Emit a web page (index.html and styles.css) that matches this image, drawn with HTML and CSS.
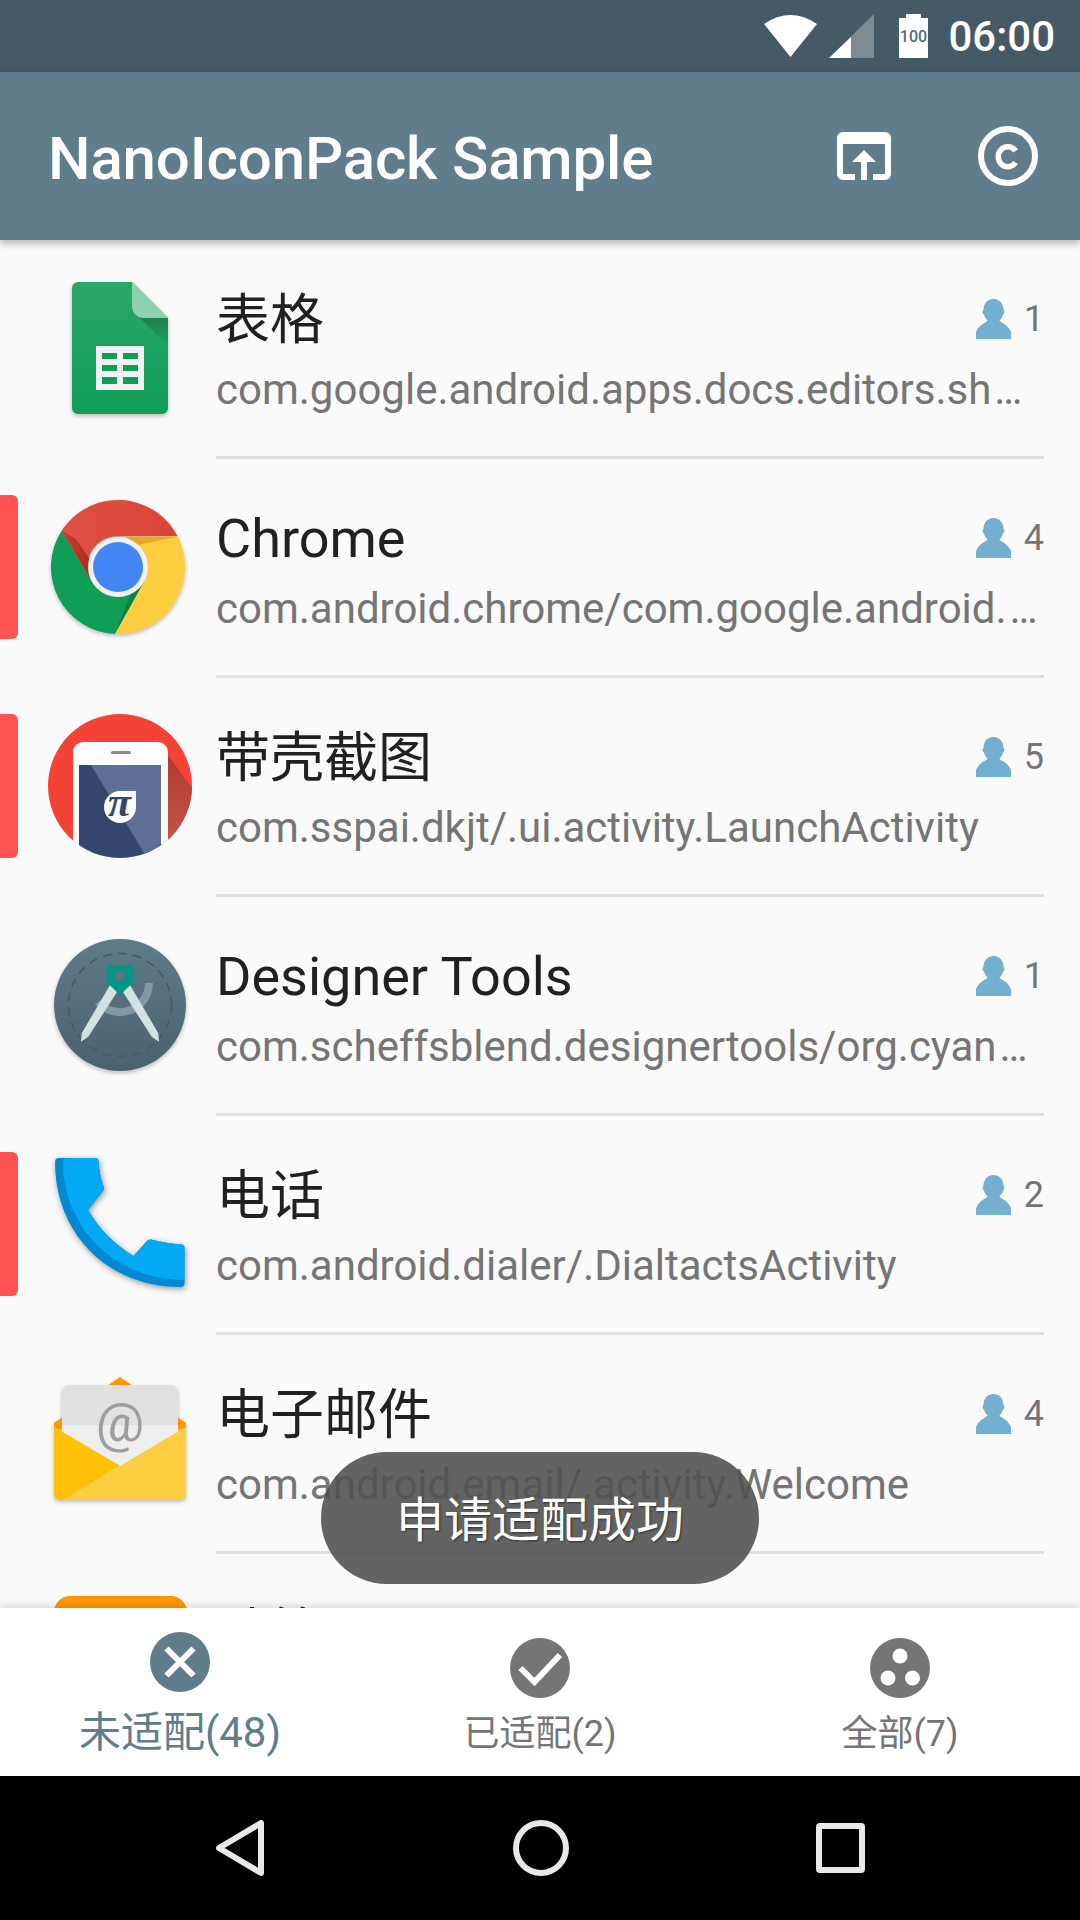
FILE: index.html
```html
<!DOCTYPE html>
<html lang="en">
<head>
    <meta charset="UTF-8">
    <meta name="viewport" content="width=device-width, initial-scale=1.0">
    <title>NanoIconPack Sample</title>
    <link rel="stylesheet" href="styles.css">
</head>
<body>
<div class="screen">
    <div class="status-bar">
        <svg class="st-wifi" width="53" height="42" viewBox="0 0 53 42"><path d="M0 9 Q26.500 -9 53 9 L26.500 42 Z" fill="#fff"/></svg>
        <svg class="st-signal" width="45" height="44" viewBox="0 0 45 44"><path d="M45 0 V44 H0 Z" fill="#fff" fill-opacity=".3"/><path d="M22 23 V44 H0 Z" fill="#fff"/></svg>
        <svg class="st-battery" width="29" height="44" viewBox="0 0 29 44"><path d="M7 0 H22 V4 H29 V44 H0 V4 H7 Z" fill="#fff"/><text class="batt-text" x="14.500" y="27.500" text-anchor="middle">100</text></svg>
        <span class="clock">06:00</span>
    </div>

    <div class="app-bar">
        <h1 class="app-title">NanoIconPack Sample</h1>
        <svg class="act-share" width="54" height="48" viewBox="0 0 54 48"><path d="M6 0 H48 a6 6 0 0 1 6 6 V42 a6 6 0 0 1 -6 6 H36 V42 H48 V12 H6 V42 H18 V48 H6 a6 6 0 0 1 -6 -6 V6 a6 6 0 0 1 6 -6 Z" fill="#fff"/><path d="M27 18 L39 30 H30 V48 H24 V30 H15 Z" fill="#fff"/></svg>
        <svg class="act-copy" width="60" height="60" viewBox="0 0 60 60"><circle cx="30" cy="30" r="27" fill="none" stroke="#fff" stroke-width="6"/><path d="M37.500 25 A9.500 10 0 1 0 37.500 36.500" fill="none" stroke="#fff" stroke-width="5.500"/></svg>
    </div>

    <div class="app-list">
        <div class="row">
            <div class="mark"></div>
            <svg class="app-icon" viewBox="0 0 144 144">
                <defs><linearGradient id="sheetBody" x1="0" y1="0" x2="0" y2="1"><stop offset="0" stop-color="#2aa76a"/><stop offset="1" stop-color="#0f9d58"/></linearGradient>
                <linearGradient id="sheetFold" x1="0" y1="0" x2="0" y2="1"><stop offset="0" stop-color="#1a7f4c"/><stop offset="1" stop-color="#1a7f4c" stop-opacity="0"/></linearGradient></defs>
                <path d="M30 6 H84 L120 42 V132 a6 6 0 0 1 -6 6 H30 a6 6 0 0 1 -6 -6 V12 a6 6 0 0 1 6 -6 Z" fill="url(#sheetBody)"/>
                <path d="M91 41 L120 70 V42 H96 Z" fill="url(#sheetFold)"/>
                <path d="M84 6 L120 42 H96 a12 12 0 0 1 -12 -12 Z" fill="#8ed1b1"/>
                <rect x="48" y="70" width="48" height="44" fill="#f1f1f1"/>
                <path d="M54 77 H69 V83 H54 Z M75 77 H90 V83 H75 Z M54 89 H69 V95 H54 Z M75 89 H90 V95 H75 Z M54 101 H69 V108 H54 Z M75 101 H90 V108 H75 Z" fill="#0f9d58"/>
            </svg>
            <div class="row-body">
                <div class="row-top">
                    <span class="row-title cjk">表格</span>
                    <svg class="user-icon" viewBox="0 0 35 40"><path d="M17.500 0 C24 0 27.500 5 27.500 11 C29 12 28.500 15 27 15.500 C26.500 18 25 20 23.500 21.500 C24 24 31 24 35 33 V40 H0 V33 C4 24 11 24 11.500 21.500 C10 20 8.500 18 8 15.500 C6.500 15 6 12 7.500 11 C7.500 5 11 0 17.500 0 Z"/></svg>
                    <span class="row-count">1</span>
                </div>
                <div class="row-sub">com.google.android.apps.docs.editors.sh<span class="dots">…</span></div>
            </div>
        </div>

        <div class="row">
            <div class="mark mark-on"></div>
            <svg class="app-icon" viewBox="0 0 144 144">
                <defs><linearGradient id="chromeRed" x1="0" y1="0" x2="1" y2="0"><stop offset="0" stop-color="#dd5143"/><stop offset="1" stop-color="#db4437"/></linearGradient>
                <linearGradient id="chromeWedge" x1="0" y1="0" x2="1" y2="0"><stop offset="0" stop-color="#c9402f"/><stop offset="1" stop-color="#a82a1a"/></linearGradient></defs>
                <path d="M13.700 35.700 L44 87 H96 L67 139 A67 67 0 0 1 13.700 35.700 Z" fill="#0f9d58"/>
                <path d="M67 139 L96 87 L70 102 L82 100 Z" fill="#0b8043"/>
                <path d="M13.700 35.700 A67 67 0 0 1 129.500 41.200 H70 A30 30 0 0 0 44 87 Z" fill="url(#chromeRed)"/>
                <path d="M13.700 35.700 L44 87 L47 72 L28 44 Z" fill="url(#chromeWedge)"/>
                <path d="M129.500 41.200 A67 67 0 0 1 67 139 L96 87 A30 30 0 0 0 70 42 Z" fill="#ffcd40"/>
                <path d="M78 42 H128 L90 50 Z" fill="#e8a825"/>
                <circle cx="70" cy="72" r="30" fill="#f1f1f1"/>
                <circle cx="70" cy="72" r="25" fill="#4285f4"/>
            </svg>
            <div class="row-body">
                <div class="row-top">
                    <span class="row-title">Chrome</span>
                    <svg class="user-icon" viewBox="0 0 35 40"><path d="M17.500 0 C24 0 27.500 5 27.500 11 C29 12 28.500 15 27 15.500 C26.500 18 25 20 23.500 21.500 C24 24 31 24 35 33 V40 H0 V33 C4 24 11 24 11.500 21.500 C10 20 8.500 18 8 15.500 C6.500 15 6 12 7.500 11 C7.500 5 11 0 17.500 0 Z"/></svg>
                    <span class="row-count">4</span>
                </div>
                <div class="row-sub">com.android.chrome/com.google.android.<span class="dots">…</span></div>
            </div>
        </div>

        <div class="row">
            <div class="mark mark-on"></div>
            <svg class="app-icon icon-flat" viewBox="0 0 144 144">
                <defs><clipPath id="piClip"><circle cx="72" cy="72" r="72"/></clipPath>
                <linearGradient id="piShade" x1="0" y1="0" x2="0" y2="1"><stop offset="0" stop-color="#b23c30"/><stop offset="1" stop-color="#c9564c"/></linearGradient></defs>
                <g clip-path="url(#piClip)">
                    <rect width="144" height="144" fill="#f44336"/>
                    <path d="M120 41 L144 74 V144 H120 Z" fill="url(#piShade)"/>
                    <path d="M25 144 V38 a10 10 0 0 1 10 -10 H110 a10 10 0 0 1 10 10 V144 Z" fill="#fff"/>
                    <rect x="31" y="51" width="82" height="93" fill="#34466e"/>
                    <path d="M43 51 H113 V129 L99 144 Z" fill="#5e6f96"/>
                    <rect x="63" y="37" width="20" height="3" rx="1.500" fill="#8a8a8a"/>
                    <path d="M72 77 H88 V93 A16 16 0 1 1 72 77 Z" fill="#fff"/>
                    <text class="pi-text" x="71.500" y="102" text-anchor="middle">π</text>
                </g>
            </svg>
            <div class="row-body">
                <div class="row-top">
                    <span class="row-title cjk">带壳截图</span>
                    <svg class="user-icon" viewBox="0 0 35 40"><path d="M17.500 0 C24 0 27.500 5 27.500 11 C29 12 28.500 15 27 15.500 C26.500 18 25 20 23.500 21.500 C24 24 31 24 35 33 V40 H0 V33 C4 24 11 24 11.500 21.500 C10 20 8.500 18 8 15.500 C6.500 15 6 12 7.500 11 C7.500 5 11 0 17.500 0 Z"/></svg>
                    <span class="row-count">5</span>
                </div>
                <div class="row-sub">com.sspai.dkjt/.ui.activity.LaunchActivity</div>
            </div>
        </div>

        <div class="row">
            <div class="mark"></div>
            <svg class="app-icon" viewBox="0 0 144 144">
                <defs><linearGradient id="toolsBg" x1="0" y1="0" x2="0" y2="1"><stop offset="0" stop-color="#5f7b88"/><stop offset="1" stop-color="#4a626d"/></linearGradient></defs>
                <circle cx="72" cy="72" r="66" fill="url(#toolsBg)"/>
                <circle cx="72" cy="72" r="51.500" fill="none" stroke="#445a65" stroke-width="1.500" stroke-dasharray="9 6"/>
                <path d="M101 50 A29 29 0 0 1 50 69" fill="none" stroke="#8298a3" stroke-width="8"/>
                <path d="M62 52 L33.700 100.300 L33 108.700 L40.300 103.700 L70.300 57 Z M82 52 L110.300 100.300 L111 108.700 L103.700 103.700 L73.700 57 Z" fill="#d0e3e1"/>
                <path d="M62 32 H82 a3.500 3.500 0 0 1 3.500 3.500 V49 L72 62 L58.500 49 V35.500 a3.500 3.500 0 0 1 3.500 -3.500 Z" fill="#009688"/>
                <circle cx="72" cy="43" r="5.500" fill="#5a7380"/>
            </svg>
            <div class="row-body">
                <div class="row-top">
                    <span class="row-title">Designer Tools</span>
                    <svg class="user-icon" viewBox="0 0 35 40"><path d="M17.500 0 C24 0 27.500 5 27.500 11 C29 12 28.500 15 27 15.500 C26.500 18 25 20 23.500 21.500 C24 24 31 24 35 33 V40 H0 V33 C4 24 11 24 11.500 21.500 C10 20 8.500 18 8 15.500 C6.500 15 6 12 7.500 11 C7.500 5 11 0 17.500 0 Z"/></svg>
                    <span class="row-count">1</span>
                </div>
                <div class="row-sub">com.scheffsblend.designertools/org.cyan<span class="dots">…</span></div>
            </div>
        </div>

        <div class="row">
            <div class="mark mark-on"></div>
            <svg class="app-icon icon-dark" viewBox="0 0 144 144">
                <path d="M7 10 a4 4 0 0 1 4 -4 H47 a3.500 3.500 0 0 1 3.500 3 C51 18 53 28 56 36 a3 3 0 0 1 -1 3 L40 58 C52 78 66 92 85.500 104 L99 89 a4 4 0 0 1 4 -1.500 C113 90 124 92 133 92.500 a3.500 3.500 0 0 1 3.500 3.500 V131 a4 4 0 0 1 -4 4 C60 135 7 82 7 10 Z" fill="#0288d1"/>
                <path d="M15 10 a4 4 0 0 1 4 -4 H47 a3.500 3.500 0 0 1 3.500 3 C51 18 53 28 56 36 a3 3 0 0 1 -1 3 L40 58 C52 78 66 92 85.500 104 L99 89 a4 4 0 0 1 4 -1.500 C113 90 124 92 133 92.500 a3.500 3.500 0 0 1 3.500 3.500 V128 C68 128 15 76 15 10 Z" fill="#03a9f4"/>
            </svg>
            <div class="row-body">
                <div class="row-top">
                    <span class="row-title cjk">电话</span>
                    <svg class="user-icon" viewBox="0 0 35 40"><path d="M17.500 0 C24 0 27.500 5 27.500 11 C29 12 28.500 15 27 15.500 C26.500 18 25 20 23.500 21.500 C24 24 31 24 35 33 V40 H0 V33 C4 24 11 24 11.500 21.500 C10 20 8.500 18 8 15.500 C6.500 15 6 12 7.500 11 C7.500 5 11 0 17.500 0 Z"/></svg>
                    <span class="row-count">2</span>
                </div>
                <div class="row-sub">com.android.dialer/.DialtactsActivity</div>
            </div>
        </div>

        <div class="row">
            <div class="mark"></div>
            <svg class="app-icon" viewBox="0 0 144 144">
                <path d="M6 58 V52 L72 6 L138 52 V58 Z" fill="#ff9800"/>
                <path d="M14 22 a8 8 0 0 1 8 -8 H122 a8 8 0 0 1 8 8 V54 H14 Z" fill="#e0e0e0"/>
                <path d="M14 54 H130 V110 H14 Z" fill="#eee"/>
                <text class="at-text" x="72" y="69.500" text-anchor="middle">@</text>
                <path d="M6 55.700 L72 94.700 L15 129 H12 a6 6 0 0 1 -6 -6 Z" fill="#ffc107"/>
                <path d="M138 55.700 L15 129 H132 a6 6 0 0 0 6 -6 Z" fill="#ffcd40"/>
            </svg>
            <div class="row-body">
                <div class="row-top">
                    <span class="row-title cjk">电子邮件</span>
                    <svg class="user-icon" viewBox="0 0 35 40"><path d="M17.500 0 C24 0 27.500 5 27.500 11 C29 12 28.500 15 27 15.500 C26.500 18 25 20 23.500 21.500 C24 24 31 24 35 33 V40 H0 V33 C4 24 11 24 11.500 21.500 C10 20 8.500 18 8 15.500 C6.500 15 6 12 7.500 11 C7.500 5 11 0 17.500 0 Z"/></svg>
                    <span class="row-count">4</span>
                </div>
                <div class="row-sub">com.android.email/.activity.Welcome</div>
            </div>
        </div>

        <div class="row">
            <div class="mark"></div>
            <svg class="app-icon icon-flat" viewBox="0 0 144 144"><rect x="6" y="6" width="133" height="132" rx="16" fill="#ff9800"/></svg>
            <div class="row-body">
                <div class="row-top">
                    <span class="row-title cjk">计算器</span>
                </div>
            </div>
        </div>
    </div>

    <div class="tabs">
        <div class="tab tab-on">
            <svg class="tab-icon" viewBox="0 0 60 60"><circle cx="30" cy="30" r="30"/><path d="M16.500 16.500 L43.500 43.500 M43.500 16.500 L16.500 43.500" stroke="#fff" stroke-width="6" fill="none"/></svg>
            <span class="tab-label">未适配(48)</span>
        </div>
        <div class="tab">
            <svg class="tab-icon" viewBox="0 0 60 60"><circle cx="30" cy="30" r="30"/><path d="M10.500 30 L24.500 44 L50 17" stroke="#fff" stroke-width="6" fill="none"/></svg>
            <span class="tab-label">已适配(2)</span>
        </div>
        <div class="tab">
            <svg class="tab-icon" viewBox="0 0 60 60"><circle cx="30" cy="30" r="30"/><circle cx="30" cy="18" r="7.500" fill="#fff"/><circle cx="18" cy="40" r="7.500" fill="#fff"/><circle cx="42.500" cy="40" r="7.500" fill="#fff"/></svg>
            <span class="tab-label">全部(7)</span>
        </div>
    </div>

    <div class="nav-bar">
        <svg width="48" height="56" viewBox="0 0 48 56"><path d="M3 28 L45 3 V53 Z" fill="none" stroke="#e8e8e8" stroke-width="6" stroke-linejoin="round"/></svg>
        <svg class="nav-home" width="56" height="56" viewBox="0 0 56 56"><circle cx="28" cy="28" r="25" fill="none" stroke="#e8e8e8" stroke-width="6"/></svg>
        <svg width="49" height="50" viewBox="0 0 49 50"><rect x="3" y="3" width="43" height="44" rx="1" fill="none" stroke="#e8e8e8" stroke-width="6"/></svg>
    </div>

    <div class="toast">申请适配成功</div>
</div>
</body>
</html>
```

FILE: styles.css
```css
* {
    box-sizing: border-box;
}
body {
    margin: 0;
    font-family: Roboto, "Noto Sans CJK SC", sans-serif;
    background-color: #fafafa;
}
.screen {
    position: relative;
    width: 1080px;
    height: 1920px;
    display: flex;
    flex-direction: column;
    overflow: hidden;
}
.status-bar {
    height: 72px;
    flex-shrink: 0;
    background-color: #455a64;
    display: flex;
    justify-content: flex-end;
    align-items: center;
    padding-right: 25px;
}
.st-signal {
    margin-left: 12px;
}
.st-battery {
    margin-left: 25px;
}
.batt-text {
    font-size: 16px;
    font-weight: 500;
    fill: #546e7a;
}
.clock {
    margin-left: 20px;
    color: #fff;
    font-size: 42px;
    font-weight: 500;
}
.app-bar {
    height: 168px;
    flex-shrink: 0;
    background-color: #607d8b;
    display: flex;
    align-items: center;
    padding: 0 42px 0 48px;
    box-shadow: 0 3px 8px rgba(0, 0, 0, 0.3);
    z-index: 2;
}
.app-title {
    flex: 1;
    margin: 4px 0 0;
    color: #fff;
    font-size: 60px;
    font-weight: 500;
    letter-spacing: -0.15px;
}
.act-copy {
    margin-left: 87px;
}
.app-list {
    flex: 1;
    min-height: 0;
    overflow: hidden;
}
.row {
    height: 219px;
    display: flex;
}
.mark {
    width: 18px;
    height: 144px;
    margin-top: 36px;
    border-radius: 0 6px 6px 0;
    flex-shrink: 0;
}
.mark-on {
    background-color: #ff5252;
}
.app-icon {
    width: 144px;
    height: 144px;
    margin: 36px 24px 0 30px;
    flex-shrink: 0;
    filter: drop-shadow(0 2px 2px rgba(0, 0, 0, 0.25));
}
.icon-flat {
    filter: none;
}
.icon-dark {
    filter: drop-shadow(1px 2px 3px rgba(0, 0, 0, 0.4));
}
.pi-text {
    font-family: "Liberation Serif", serif;
    font-size: 42px;
    font-weight: bold;
    font-style: italic;
    fill: #34466e;
}
.at-text {
    font-size: 54px;
    fill: #9e9e9e;
}
.row-body {
    flex: 1;
    min-width: 0;
    margin-right: 36px;
    padding-top: 38px;
    border-bottom: 3px solid #e0e0e0;
}
.row-top {
    display: flex;
    align-items: center;
    height: 82px;
}
.row-title {
    flex: 1;
    color: #212121;
    font-size: 54px;
}
.cjk {
    padding-bottom: 8px;
}
.user-icon {
    width: 35px;
    height: 40px;
    fill: #74afd0;
}
.row-count {
    margin-left: 12px;
    min-width: 21px;
    text-align: right;
    color: #757575;
    font-size: 36px;
}
.row-sub {
    color: #757575;
    font-size: 42px;
    line-height: 60px;
    white-space: nowrap;
}
.dots {
    margin-left: 3px;
}
.tabs {
    height: 168px;
    flex-shrink: 0;
    background-color: #fff;
    display: grid;
    grid-template-columns: repeat(3, 1fr);
    box-shadow: 0 -2px 8px rgba(0, 0, 0, 0.15);
    z-index: 2;
}
.tab {
    display: flex;
    flex-direction: column;
    align-items: center;
    padding-top: 30px;
    color: #757575;
}
.tab-on {
    padding-top: 24px;
    color: #607d8b;
}
.tab-icon {
    width: 60px;
    height: 60px;
    fill: currentColor;
}
.tab-label {
    font-size: 36px;
    line-height: 60px;
    margin-top: 6px;
}
.tab-on .tab-label {
    font-size: 42px;
    margin-top: 11px;
}
.nav-bar {
    height: 144px;
    flex-shrink: 0;
    background-color: #000;
    display: flex;
    align-items: center;
    padding: 0 215px 0 216px;
    justify-content: space-between;
}
.nav-home {
    margin-left: 1px;
}
.toast {
    position: absolute;
    left: 321px;
    top: 1452px;
    width: 438px;
    height: 132px;
    padding-bottom: 4px;
    border-radius: 66px;
    background-color: rgba(82, 82, 82, 0.9);
    color: #fff;
    font-size: 48px;
    display: flex;
    align-items: center;
    justify-content: center;
    text-shadow: 1px 1px 2px rgba(0, 0, 0, 0.5);
    z-index: 3;
}
```
